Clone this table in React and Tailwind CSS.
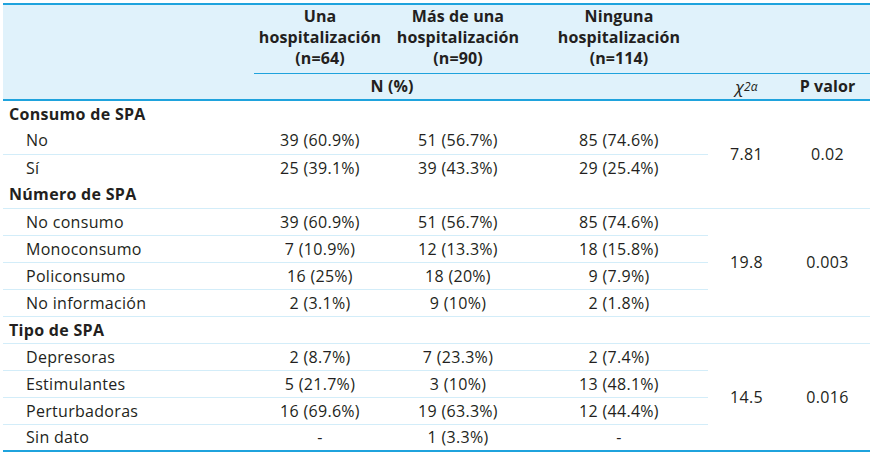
import React from "react";

const groups = [
  {
    title: "Consumo de SPA",
    topLine: false,
    chi: "7.81",
    p: "0.02",
    statOnTitle: true,
    rows: [
      ["No", "39 (60.9%)", "51 (56.7%)", "85 (74.6%)"],
      ["Sí", "25 (39.1%)", "39 (43.3%)", "29 (25.4%)"],
    ],
  },
  {
    title: "Número de SPA",
    topLine: false,
    chi: "19.8",
    p: "0.003",
    rows: [
      ["No consumo", "39 (60.9%)", "51 (56.7%)", "85 (74.6%)"],
      ["Monoconsumo", "7 (10.9%)", "12 (13.3%)", "18 (15.8%)"],
      ["Policonsumo", "16 (25%)", "18 (20%)", "9 (7.9%)"],
      ["No información", "2 (3.1%)", "9 (10%)", "2 (1.8%)"],
    ],
  },
  {
    title: "Tipo de SPA",
    topLine: true,
    chi: "14.5",
    p: "0.016",
    rows: [
      ["Depresoras", "2 (8.7%)", "7 (23.3%)", "2 (7.4%)"],
      ["Estimulantes", "5 (21.7%)", "3 (10%)", "13 (48.1%)"],
      ["Perturbadoras", "16 (69.6%)", "19 (63.3%)", "12 (44.4%)"],
      ["Sin dato", "-", "1 (3.3%)", "-"],
    ],
  },
];

const line = "border-t border-[#d3edf9]";

export default function App() {
  return (
    <div
      className="bg-white pt-[3px] pl-[3px] w-[872px] h-[455px] text-[#231f20] text-[16px] tracking-[0.3px]"
      style={{ fontFamily: '"Open Sans", "Noto Sans", sans-serif' }}
    >
      <table className="border-collapse table-fixed w-[867px] border-b-2 border-b-[#1fa3dd]">
        <colgroup>
          <col className="w-[251px]" />
          <col className="w-[132px]" />
          <col className="w-[144px]" />
          <col className="w-[178px]" />
          <col className="w-[77px]" />
          <col className="w-[85px]" />
        </colgroup>
        <thead className="bg-[#e0f2fb] font-bold tracking-[0.1px]">
          <tr className="border-t-2 border-[#1fa3dd] h-[69px]">
            <th></th>
            <th className="border-b border-[#1fa3dd] leading-[21px] font-bold pb-[2px] whitespace-nowrap">
              Una<br />hospitalización<br />(n=64)
            </th>
            <th className="border-b border-[#1fa3dd] leading-[21px] font-bold pb-[2px] whitespace-nowrap">
              Más de una<br />hospitalización<br />(n=90)
            </th>
            <th className="border-b border-[#1fa3dd] leading-[21px] font-bold pb-[2px] whitespace-nowrap">
              Ninguna<br />hospitalización<br />(n=114)
            </th>
            <th className="border-b border-[#1fa3dd]"></th>
            <th className="border-b border-[#1fa3dd]"></th>
          </tr>
          <tr className="h-[27px] border-b-2 border-[#1fa3dd]">
            <th></th>
            <th colSpan={2} className="font-bold">N (%)</th>
            <th></th>
            <th className="font-normal italic">
              <span className="text-[17px]">χ</span>
              <sup className="text-[12px] relative -top-[2px]">2α</sup>
            </th>
            <th className="font-bold">P valor</th>
          </tr>
        </thead>
        <tbody>
          {groups.map((g, gi) => {
            const out = [];
            if (g.statOnTitle) {
              out.push(
                <tr key={g.title} className="h-[27px]">
                  <td className="pl-[6px] font-bold">{g.title}</td>
                  <td></td>
                  <td></td>
                  <td></td>
                  <td rowSpan={g.rows.length + 2} className="text-center">{g.chi}</td>
                  <td rowSpan={g.rows.length + 2} className="text-center">{g.p}</td>
                </tr>
              );
            } else {
              out.push(
                <tr key={g.title} className={`h-[27px] ${g.topLine ? line : ""}`}>
                  <td className="pl-[6px] font-bold">{g.title}</td>
                  <td></td>
                  <td></td>
                  <td></td>
                  {gi === 2 && <td className={line}></td>}
                  {gi === 2 && <td className={line}></td>}
                </tr>
              );
            }
            g.rows.forEach((r, ri) => {
              const top = ri > 0 || gi > 0;
              const cls = top ? line : "";
              out.push(
                <tr key={g.title + r[0]} className="h-[27px]">
                  <td className={`pl-[23px] ${cls}`}>{r[0]}</td>
                  <td className={`text-center ${cls}`}>{r[1]}</td>
                  <td className={`text-center ${cls}`}>{r[2]}</td>
                  <td className={`text-center ${cls}`}>{r[3]}</td>
                  {!g.statOnTitle && ri === 0 && (
                    <td rowSpan={g.rows.length} className={`text-center ${line}`}>{g.chi}</td>
                  )}
                  {!g.statOnTitle && ri === 0 && (
                    <td rowSpan={g.rows.length} className={`text-center ${line}`}>{g.p}</td>
                  )}
                </tr>
              );
            });
            return out;
          })}
        </tbody>
      </table>
    </div>
  );
}
